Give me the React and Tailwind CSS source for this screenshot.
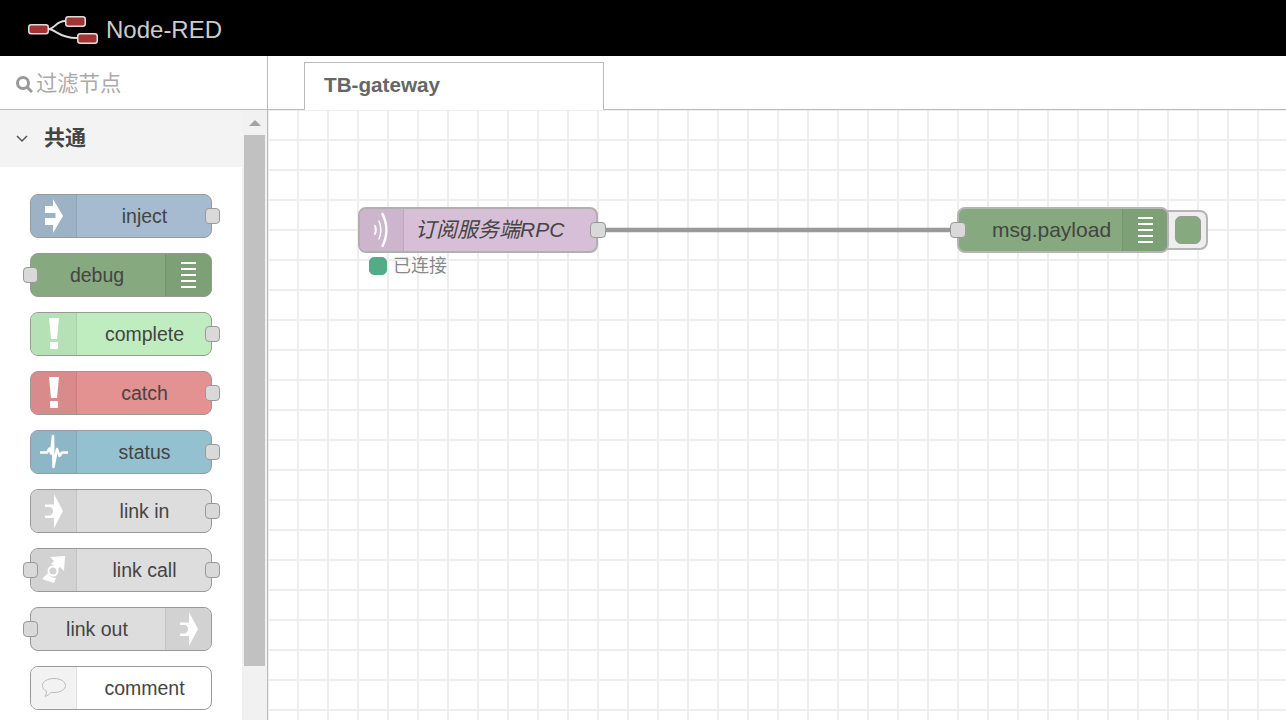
import { useState } from "react";

const FONT = "font-['Liberation_Sans','Noto_Sans_CJK_SC',sans-serif]";

function InjectIcon() {
  return (
    <svg width="18" height="34" viewBox="0 0 18 34" fill="#fff">
      <path d="M8 0l10 17L8 34v-8H0v-7h10.500v-5H0V7h8z" />
    </svg>
  );
}

function DebugIcon() {
  return (
    <svg width="15" height="26" viewBox="0 0 15 26" fill="#fff">
      <rect y="0" width="15" height="2" />
      <rect y="6" width="15" height="2" />
      <rect y="12" width="15" height="2" />
      <rect y="18" width="15" height="2" />
      <rect y="24" width="15" height="2" />
    </svg>
  );
}

function AlertIcon() {
  return (
    <svg width="12" height="34" viewBox="0 0 12 34" fill="#fff">
      <path d="M1 1h10l-2 21H3z" />
      <rect x="2" y="25" width="8" height="7" rx="1" />
    </svg>
  );
}

function StatusIcon() {
  return (
    <svg width="28" height="36" viewBox="0 0 28 36" fill="none" stroke="#fff" strokeWidth="2.500" strokeLinejoin="round">
      <path d="M0 18.500h7l2.500-4 1.500 5L13 2l.500 31L17 15l2.500 7 2.500-3.500h6" />
    </svg>
  );
}

function LinkIcon() {
  return (
    <svg width="18" height="34" viewBox="0 0 18 34" fill="#fff" fillRule="evenodd">
      <path d="M9 0l9 17-9 17v-10H0V10.500h9zM0 13h4c3 0 4 2 4 4s-1 4.500-4 4.500H0z" />
    </svg>
  );
}

function LinkCallIcon() {
  return (
    <svg width="24" height="30" viewBox="0 0 24 30" fill="#fff">
      <path d="M8 2l15-1-1 15-4-4-3 3c-1-3-3-5-6-6l3-3z" />
      <path d="M0 24l6-6c1 3 4 5 8 5l-2 5z" />
      <circle cx="11" cy="16" r="4.500" fill="none" stroke="#fff" strokeWidth="2" />
    </svg>
  );
}

function CommentIcon() {
  return (
    <svg width="26" height="22" viewBox="0 0 26 22" fill="none" stroke="#bbb" strokeWidth="1">
      <path d="M13 1.500c6.500 0 11.500 3 11.500 7s-5 7-11.500 7c-1 0-2 0-3-.2-1.500 2-3.500 3.500-6 4 1-1.500 1.500-3 1.500-5C3 13 1.500 11 1.500 8.500c0-4 5-7 11.500-7z" />
    </svg>
  );
}

function WaveIcon() {
  return (
    <svg width="15" height="36" viewBox="0 0 15 36" fill="none" stroke="#fff" strokeLinecap="round">
      <path d="M1 14c1 2.500 1 5.500 0 8" strokeWidth="2" />
      <path d="M5 9c2.500 6 2.500 12 0 18" strokeWidth="1.500" />
      <path d="M8.500 2c5 10 5 22 0 32" strokeWidth="2.500" />
    </svg>
  );
}

function Port({ className }) {
  return (
    <span className={`absolute rounded-[4px] border border-[#999] bg-[#d9d9d9] ${className}`} />
  );
}

const paletteNodes = [
  { label: "inject", color: "bg-[#a6bbcf]", tab: "bg-[#9eb2c5]", icon: <InjectIcon />, out: true },
  { label: "debug", color: "bg-[#87a980]", tab: "bg-[#7da076]", icon: <DebugIcon />, in: true, right: true },
  { label: "complete", color: "bg-[#c0edc0]", tab: "bg-[#b6e1b6]", icon: <AlertIcon />, out: true },
  { label: "catch", color: "bg-[#e49191]", tab: "bg-[#d98a8a]", icon: <AlertIcon />, out: true },
  { label: "status", color: "bg-[#94c1d0]", tab: "bg-[#8db7c6]", icon: <StatusIcon />, out: true },
  { label: "link in", color: "bg-[#dddddd]", tab: "bg-[#d2d2d2]", icon: <LinkIcon />, out: true },
  { label: "link call", color: "bg-[#dddddd]", tab: "bg-[#d2d2d2]", icon: <LinkCallIcon />, in: true, out: true },
  { label: "link out", color: "bg-[#dddddd]", tab: "bg-[#d2d2d2]", icon: <LinkIcon />, in: true, right: true },
  { label: "comment", color: "bg-white", tab: "bg-[#f2f2f2]", icon: <CommentIcon /> },
];

function PaletteNode({ node }) {
  return (
    <div className={`relative w-[182px] h-[44px] rounded-[8px] border border-[#999] text-[#444] text-[19.5px] ${node.color} flex ${node.right ? "flex-row-reverse" : ""}`}>
      <div className={`w-[46px] shrink-0 flex items-center justify-center border-[#00000012] ${node.right ? "border-l rounded-r-[7px]" : "border-r rounded-l-[7px]"} ${node.tab}`}>
        {node.icon}
      </div>
      <div className={`flex-1 flex items-center justify-center pt-[2px] ${node.right ? "pr-[2px]" : "pl-[1px]"}`}>{node.label}</div>
      {node.in && <Port className="left-[-8px] top-[13px] w-[15px] h-[16px]" />}
      {node.out && <Port className="right-[-9px] top-[13px] w-[15px] h-[16px]" />}
    </div>
  );
}

export default function App() {
  const [filter, setFilter] = useState("");

  return (
    <div className={`w-[1286px] h-[720px] overflow-hidden flex flex-col bg-white ${FONT}`}>
      {/* header */}
      <header className="h-[56px] shrink-0 bg-black flex items-center pl-[28px] gap-[8px]">
        <svg width="70" height="28" viewBox="0 0 70 28" className="mt-[4px]">
          <path d="M20 13c7 0 8-8 17-8M20 13c8 0 10 9 29 9" fill="none" stroke="#ddd" strokeWidth="2" />
          <rect x="0.750" y="8.750" width="19.500" height="9" rx="2.500" fill="#a33333" stroke="#ddd" strokeWidth="1.500" />
          <rect x="37.750" y="0.750" width="19.500" height="9.500" rx="2.500" fill="#a33333" stroke="#ddd" strokeWidth="1.500" />
          <rect x="49.750" y="17.750" width="19.500" height="9.500" rx="2.500" fill="#a33333" stroke="#ddd" strokeWidth="1.500" />
        </svg>
        <span className="text-[#ccc] text-[24px] font-normal mt-[4px]">Node-RED</span>
      </header>

      <div className="flex-1 flex min-h-0">
        {/* palette */}
        <aside className="w-[268px] shrink-0 border-r border-[#bbb] flex flex-col">
          <div className="h-[54px] shrink-0 border-b border-[#bbb] flex items-center pl-[15px] pt-[3px] gap-[3px]">
            <svg width="18" height="18" viewBox="0 0 18 18" fill="none" stroke="#999" strokeWidth="3" className="mt-[-1px]">
              <circle cx="8" cy="8" r="5.500" />
              <path d="M12 12l5 5" />
            </svg>
            <input
              value={filter}
              onChange={(e) => setFilter(e.target.value)}
              placeholder="过滤节点"
              className="w-[200px] outline-none text-[21.300px] pt-[1px] placeholder:text-[#aaa]"
            />
          </div>
          <div className="flex-1 flex min-h-0">
            <div className="w-[242px] shrink-0 overflow-hidden">
              <div className="h-[57px] bg-[#f3f3f3] flex items-center pl-[15px] pb-[1px] gap-[15px] text-[#444] text-[21px] font-bold">
                <svg width="14" height="14" viewBox="0 0 14 14" fill="none" stroke="#555" strokeWidth="1.500">
                  <path d="M2 5l5 5 5-5" />
                </svg>
                共通
              </div>
              <div className="pt-[27px] pl-[30px] flex flex-col gap-[15px]">
                {paletteNodes.map((node) => (
                  <PaletteNode key={node.label} node={node} />
                ))}
              </div>
            </div>
            {/* scrollbar */}
            <div className="w-[25px] bg-[#f1f1f1] flex flex-col">
              <div className="h-[25px] shrink-0 flex items-center justify-center">
                <span className="w-0 h-0 border-l-[6px] border-r-[6px] border-b-[6px] border-l-transparent border-r-transparent border-b-[#a3a3a3]" />
              </div>
              <div className="h-[531px] w-[21px] ml-[2px] bg-[#c1c1c1]" />
            </div>
          </div>
        </aside>

        {/* workspace */}
        <main className="flex-1 flex flex-col min-w-0">
          <div className="h-[54px] shrink-0 border-b border-[#bbb] pl-[36px] flex items-end">
            <div className="w-[300px] h-[48px] mb-[-1px] bg-white border border-b-0 border-[#bbb] pl-[19px] pb-[3px] flex items-center text-[#666] text-[20.700px] font-bold">
              TB-gateway
            </div>
          </div>
          <div className="relative flex-1 overflow-hidden bg-white bg-[linear-gradient(#eeeeee_2px,transparent_2px),linear-gradient(90deg,#eeeeee_2px,transparent_2px)] bg-[size:30px_30px] bg-[position:-1px_-1px]">
            {/* wire */}
            <svg className="absolute left-[330px] top-[116px]" width="360" height="8">
              <path d="M0 4h360" stroke="#999" strokeWidth="4.500" />
            </svg>

            {/* mqtt in node */}
            <div className="absolute left-[90px] top-[97px] w-[240px] h-[46px] rounded-[8px] border-2 border-[#b0b0b0] bg-[#d8bfd8] flex text-[#444] text-[21px] italic">
              <div className="w-[44px] shrink-0 rounded-l-[6px] bg-[#cdb5cd] border-r border-[#00000012] flex items-center justify-center">
                <WaveIcon />
              </div>
              <div className="flex-1 flex items-center pl-[11px]">订阅服务端RPC</div>
              <Port className="right-[-10px] top-[13px] w-[16px] h-[16px]" />
            </div>
            <div className="absolute left-[101px] top-[146px] flex items-center gap-[6px] text-[#888] text-[18px] leading-[20px]">
              <span className="w-[18px] h-[18px] rounded-[5px] bg-[#5a8] border border-[#5a8]" />
              已连接
            </div>

            {/* debug node */}
            <div className="absolute left-[870px] top-[100px] w-[70px] h-[40px] rounded-[8px] border-2 border-[#b5b5b5] bg-[#eee] flex items-center justify-end pr-[5px]">
              <span className="w-[26px] h-[28px] rounded-[6px] border border-[#999] bg-[#87a980]" />
            </div>
            <div className="absolute left-[689px] top-[97px] w-[212px] h-[46px] rounded-[8px] border-2 border-[#b5b5b5] bg-[#87a980] flex text-[#444] text-[21px]">
              <div className="flex-1 flex items-center pl-[33px] pb-[1px]">msg.payload</div>
              <div className="w-[45px] shrink-0 rounded-r-[6px] bg-[#7da076] border-l border-[#00000012] flex items-center justify-center">
                <DebugIcon />
              </div>
              <Port className="left-[-9px] top-[13px] w-[16px] h-[16px]" />
            </div>
          </div>
        </main>
      </div>
    </div>
  );
}
